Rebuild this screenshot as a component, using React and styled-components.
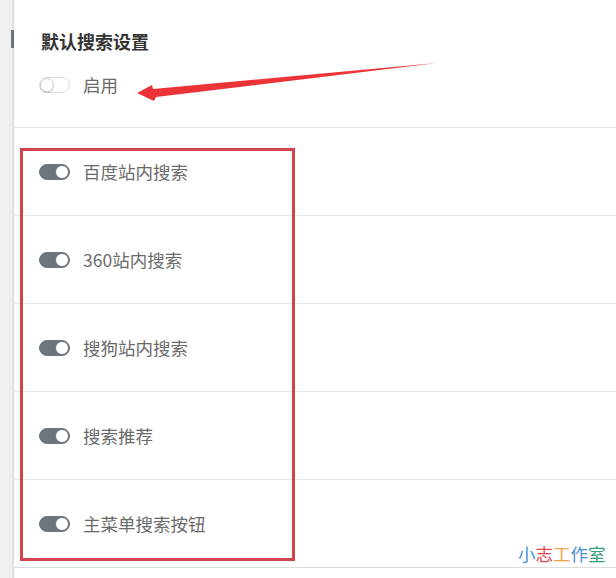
import React from "react";
import styled, { createGlobalStyle } from "styled-components";

const Global = createGlobalStyle`
  html, body { margin: 0; padding: 0; background: #fff; }
  body { font-family: "Microsoft YaHei", "Noto Sans CJK SC", "Noto Sans", sans-serif; }
`;

const Page = styled.div`
  position: relative;
  width: 616px;
  height: 578px;
  display: flex;
  overflow: hidden;
  background: #fff;
`;

const Sidebar = styled.div`
  width: 12px;
  flex: none;
  background: #f0f0f0;
  border-right: 2px solid #e2e2e2;
  display: flex;
  flex-direction: column;
  align-items: flex-end;
  padding-top: 30px;
  box-sizing: content-box;
`;

const Marker = styled.div`
  width: 4px;
  height: 18px;
  margin-right: -3px;
  background: #6c737b;
`;

const Main = styled.div`
  flex: 1;
  display: flex;
  flex-direction: column;
  border-left: 1px solid #f4f4f4;
`;

const Header = styled.div`
  height: 128px;
  box-sizing: border-box;
  border-bottom: 1px solid #e4e4e4;
  padding: 29px 0 0 26px;
  display: flex;
  flex-direction: column;
  gap: 20px;
`;

const Title = styled.div`
  font-size: 18px;
  line-height: 24px;
  font-weight: 700;
  color: #333;
`;

const Row = styled.div`
  height: 88px;
  box-sizing: border-box;
  border-bottom: 1px solid ${(p) => (p.$last ? "#dcdcdc" : "#e6e6e6")};
  display: flex;
  align-items: center;
  padding-left: 24px;
  gap: 13px;
`;

const OptionLine = styled.div`
  display: flex;
  align-items: center;
  gap: 13px;
  margin-left: -2px;
`;

const Track = styled.span`
  position: relative;
  width: 31px;
  height: 16px;
  box-sizing: border-box;
  border-radius: 8px;
  flex: none;
  background: ${(p) => (p.$on ? "#6c757d" : "#fff")};
  border: 1px solid ${(p) => (p.$on ? "#6c757d" : "#dcdcdc")};
`;

const Knob = styled.span`
  position: absolute;
  top: 0px;
  ${(p) => (p.$on ? "right: 0px;" : "left: 0px;")}
  width: 14px;
  height: 14px;
  box-sizing: border-box;
  border-radius: 50%;
  background: #fff;
  border: 1px solid ${(p) => (p.$on ? "#6c757d" : "#d0d0d0")};
  box-shadow: ${(p) => (p.$on ? "none" : "0 1px 1px rgba(0,0,0,0.15)")};
`;

const Label = styled.span`
  font-size: 17.5px;
  line-height: 24px;
  color: #6a6a6a;
`;

const Toggle = ({ on }) => (
  <Track $on={on}>
    <Knob $on={on} />
  </Track>
);

const Highlight = styled.div`
  position: absolute;
  left: 20px;
  top: 148px;
  width: 275px;
  height: 413px;
  box-sizing: border-box;
  border: 3px solid #d3434b;
  pointer-events: none;
`;

const ArrowSvg = styled.svg`
  position: absolute;
  left: 0;
  top: 0;
  pointer-events: none;
`;

const Watermark = styled.div`
  position: absolute;
  left: 518px;
  top: 542px;
  display: flex;
  font-size: 17.5px;
  line-height: 24px;
  font-family: "Noto Sans CJK SC", sans-serif;
`;

const WChar = styled.span`
  color: ${(p) => p.$c};
`;

const options = ["百度站内搜索", "360站内搜索", "搜狗站内搜索", "搜索推荐", "主菜单搜索按钮"];
const wm = [
  ["小", "#4a8fdc"],
  ["志", "#e9454f"],
  ["工", "#f4a34a"],
  ["作", "#4a8fdc"],
  ["室", "#35a07a"],
];

export default function App() {
  return (
    <>
      <Global />
      <Page>
        <Sidebar>
          <Marker />
        </Sidebar>
        <Main>
          <Header>
            <Title>默认搜索设置</Title>
            <OptionLine>
              <Toggle on={false} />
              <Label>启用</Label>
            </OptionLine>
          </Header>
          {options.map((o, i) => (
            <Row key={o} $last={i === options.length - 1}>
              <Toggle on />
              <Label>{o}</Label>
            </Row>
          ))}
        </Main>
        <Highlight />
        <ArrowSvg width="616" height="578" viewBox="0 0 616 578">
          <polygon
            points="137,93 152,85 153,89 437,63 156,97 154,101"
            fill="#ec3338"
          />
        </ArrowSvg>
        <Watermark>
          {wm.map(([c, col]) => (
            <WChar key={c} $c={col}>
              {c}
            </WChar>
          ))}
        </Watermark>
      </Page>
    </>
  );
}
